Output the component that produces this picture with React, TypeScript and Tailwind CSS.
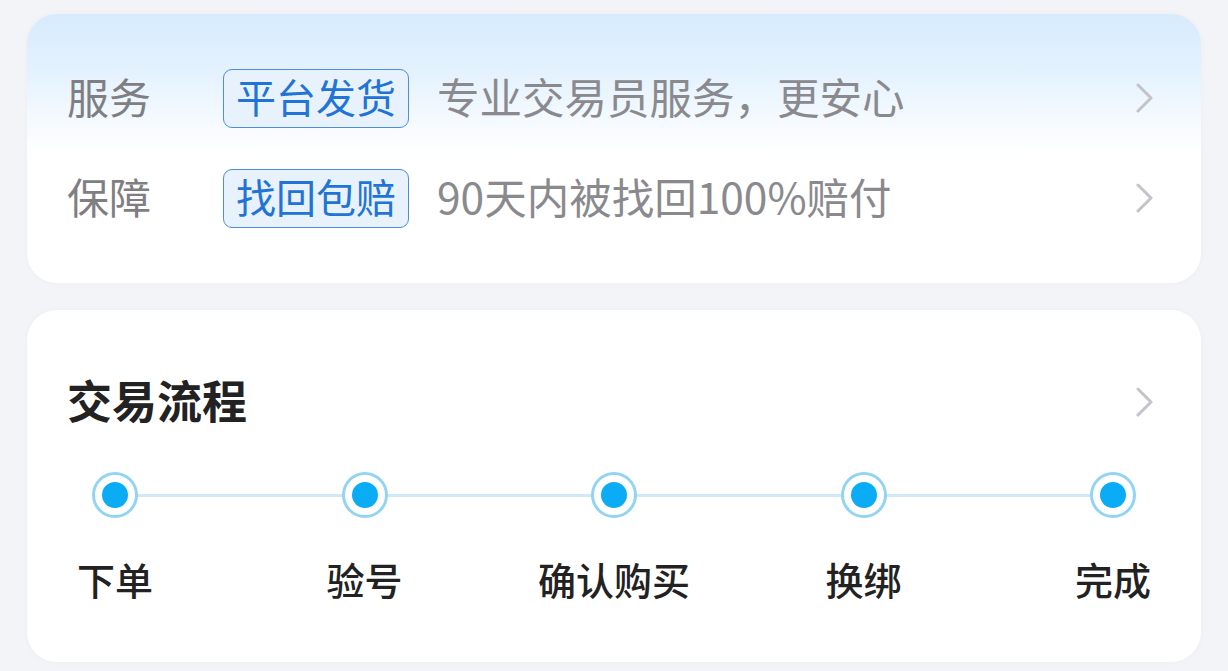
const font = { fontFamily: '"Noto Sans CJK SC", "Noto Sans", sans-serif' };

function Chevron() {
  return (
    <svg width="20" height="30" viewBox="0 0 20 30" className="shrink-0">
      <polyline points="3,2 16,15 3,28" fill="none" stroke="#c3c4c9" strokeWidth="3" strokeLinecap="round" strokeLinejoin="round" />
    </svg>
  );
}

const rows = [
  { label: '服务', tag: '平台发货', desc: '专业交易员服务，更安心' },
  { label: '保障', tag: '找回包赔', desc: '90天内被找回100%赔付' },
];

const steps = ['下单', '验号', '确认购买', '换绑', '完成'];

export default function App() {
  return (
    <div className="h-[671px] w-[1228px] bg-[#f3f4f8] px-[27px] pt-[14px] flex flex-col gap-[27px]" style={font}>
      {/* service card */}
      <div className="rounded-[30px] bg-[linear-gradient(180deg,#d6ebfd_0%,#e4f2fe_22%,#f5faff_40%,#ffffff_52%)] pl-[40px] pr-[46px] pt-[34px] pb-[35px] shadow-[0_0_6px_rgba(0,0,0,0.03)]">
        {rows.map((r) => (
          <div key={r.label} className="h-[100px] flex items-center">
            <div className="w-[156px] text-[42px] leading-none text-[#7f7f83] -mt-[4px]">{r.label}</div>
            <div className="h-[59px] flex items-center px-[12px] rounded-[9px] border-[1.5px] border-[#4b8fdb] bg-[#e7f2fd] text-[40px] leading-none text-[#2174d6]">
              <span className="-mt-[4px]">{r.tag}</span>
            </div>
            <div className="ml-[28px] flex-1 text-[42.5px] leading-none text-[#8a8a8e] -mt-[4px]">{r.desc}</div>
            <Chevron />
          </div>
        ))}
      </div>

      {/* process card */}
      <div className="h-[352px] rounded-[30px] bg-white pl-[40px] pr-[46px] pt-[62px] shadow-[0_0_6px_rgba(0,0,0,0.03)]">
        <div className="h-[60px] flex items-center justify-between">
          <div className="text-[45px] leading-none font-bold text-[#222222] -mt-[5px]">交易流程</div>
          <Chevron />
        </div>
        <div className="relative mt-[40px] ml-[25px] mr-[19px]">
          <div className="absolute left-[23px] right-[23px] top-[22px] h-[3px] bg-[#cfe9f6]" />
          <div className="relative flex justify-between">
            {steps.map((s) => (
              <div key={s} className="w-[46px] flex flex-col items-center">
                <div className="w-[46px] h-[46px] rounded-full border-[3px] border-[#92d4f1] bg-white flex items-center justify-center">
                  <div className="w-[26px] h-[26px] rounded-full bg-[#0bacf6]" />
                </div>
                <div className="mt-[42px] whitespace-nowrap text-[38px] leading-none font-medium text-[#222222]">{s}</div>
              </div>
            ))}
          </div>
        </div>
      </div>
    </div>
  );
}
